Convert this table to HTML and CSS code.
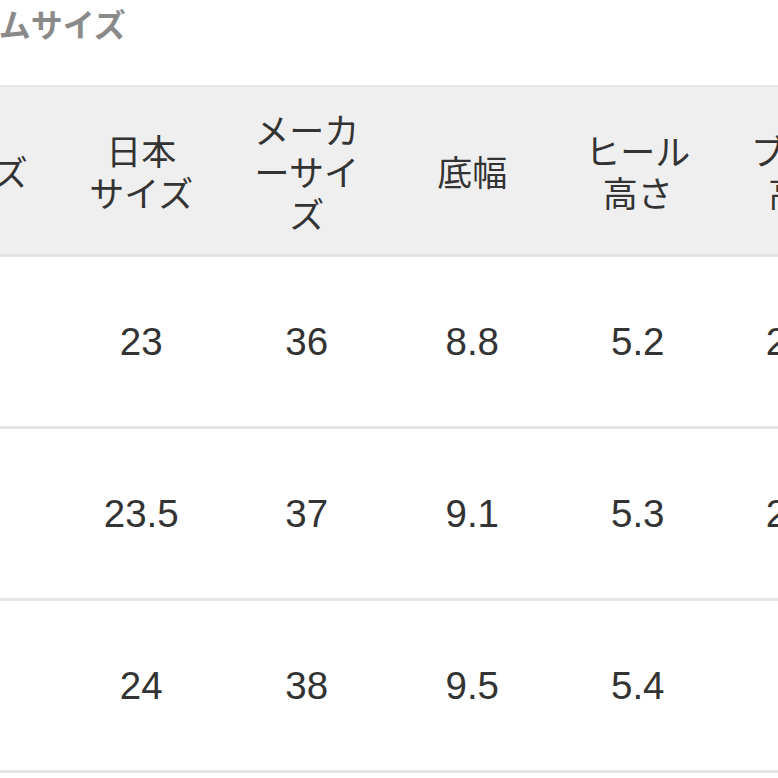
FILE: index.html
```html
<!DOCTYPE html>
<html lang="ja">
<head>
<meta charset="utf-8">
<title>アイテムサイズ</title>
<link rel="stylesheet" href="styles.css">
</head>
<body>
<div class="page">
  <h2 class="title">アイテムサイズ</h2>
  <table class="size-table">
    <colgroup>
      <col class="col"><col class="col"><col class="col"><col class="col"><col class="col"><col class="col">
    </colgroup>
    <thead>
      <tr>
        <th>サイズ</th>
        <th>日本<br>サイズ</th>
        <th>メーカ<br>ーサイ<br>ズ</th>
        <th>底幅</th>
        <th>ヒール<br>高さ</th>
        <th>ブーツ<br>高さ</th>
      </tr>
    </thead>
    <tbody>
      <tr><td>XS</td><td>23</td><td>36</td><td>8.8</td><td>5.2</td><td>20.5</td></tr>
      <tr><td>S</td><td>23.5</td><td>37</td><td>9.1</td><td>5.3</td><td>21.0</td></tr>
      <tr><td>M</td><td>24</td><td>38</td><td>9.5</td><td>5.4</td><td>22</td></tr>
    </tbody>
  </table>
</div>
</body>
</html>
```

FILE: styles.css
```css
html, body {
  margin: 0;
  padding: 0;
  background: #ffffff;
  overflow: hidden;
}

.page {
  margin-left: -107px;
  width: 1000px;
  font-family: "Liberation Sans", "Noto Sans CJK JP", sans-serif;
  color: #333333;
}

.title {
  margin: 0 0 39px 0;
  padding-left: 13px;
  font-family: "Noto Sans CJK JP", sans-serif;
  font-size: 32px;
  line-height: 46px;
  font-weight: 700;
  color: #8a8a8a;
}

.size-table {
  table-layout: fixed;
  width: 993px;
  border-collapse: collapse;
  border-spacing: 0;
  border-top: 2px solid #e8e8e8;
}

.col {
  width: 165.5px;
}

.size-table th {
  height: 167px;
  padding: 0;
  background: #efefef;
  font-family: "Noto Sans CJK JP", sans-serif;
  font-size: 35px;
  line-height: 42px;
  font-weight: 400;
  color: #333333;
  text-align: center;
  vertical-align: middle;
  white-space: nowrap;
  border-bottom: 3px solid #e4e4e4;
}

.size-table td {
  height: 169px;
  padding: 0;
  font-size: 38.5px;
  line-height: 44px;
  text-align: center;
  vertical-align: middle;
  color: #333333;
  border-bottom: 3px solid #e6e6e6;
}
```
